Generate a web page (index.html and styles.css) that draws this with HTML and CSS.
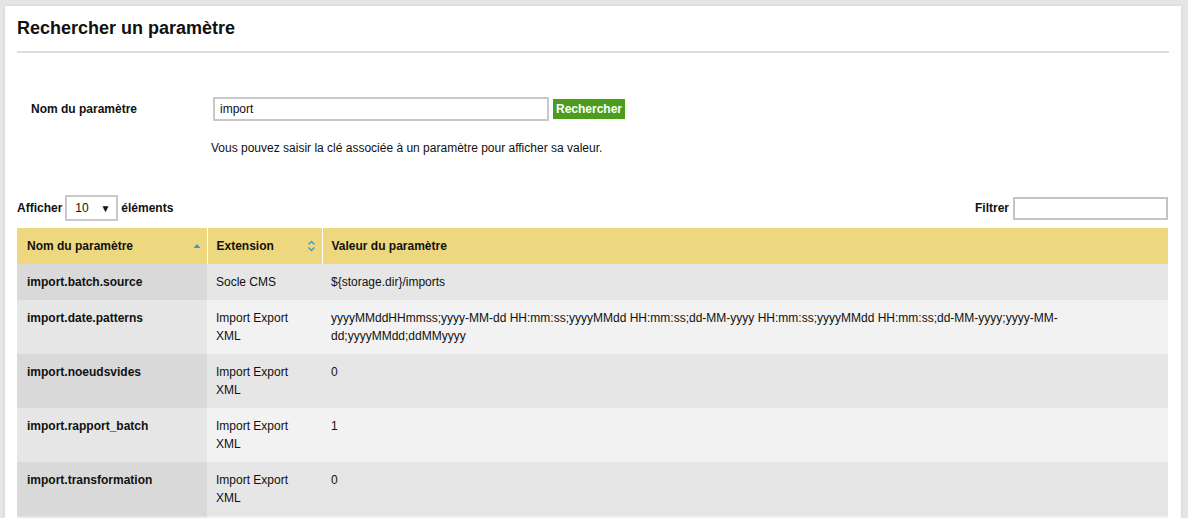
FILE: index.html
```html
<!DOCTYPE html>
<html lang="fr">
<head>
<meta charset="utf-8">
<title>Rechercher un paramètre</title>
<link rel="stylesheet" href="styles.css">
</head>
<body>
<div class="panel">
  <h1 class="title">Rechercher un paramètre</h1>
  <div class="search-form">
    <label class="form-label">Nom du paramètre</label>
    <div class="form-field">
      <div class="field-row">
        <input class="text-input" type="text" value="import">
        <button class="btn-search">Rechercher</button>
      </div>
      <p class="help">Vous pouvez saisir la clé associée à un paramètre pour afficher sa valeur.</p>
    </div>
  </div>
  <div class="table-tools">
    <div class="length">
      <span>Afficher</span>
      <span class="select"><span class="select-val">10</span><span class="select-arrow">&#9660;</span></span>
      <span>éléments</span>
    </div>
    <div class="filter">
      <span>Filtrer</span>
      <span class="filter-input"></span>
    </div>
  </div>
  <table class="data">
    <colgroup><col class="c1"><col class="c2"><col></colgroup>
    <thead>
      <tr>
        <th><div class="th-in"><span>Nom du paramètre</span>
          <svg class="sort" width="8" height="6" viewBox="0 0 8 6"><path d="M0.5 5 L4 1 L7.5 5 Z" fill="#3a9bd0"/></svg></div></th>
        <th><div class="th-in"><span>Extension</span>
          <svg class="sort" width="9" height="12" viewBox="0 0 9 12"><path d="M1.5 4.5 L4.5 1.5 L7.5 4.5 M1.5 7.5 L4.5 10.5 L7.5 7.5" fill="none" stroke="#3a9bd0" stroke-width="1.4"/></svg></div></th>
        <th><div class="th-in"><span>Valeur du paramètre</span></div></th>
      </tr>
    </thead>
    <tbody>
      <tr class="odd"><td>import.batch.source</td><td>Socle CMS</td><td>${storage.dir}/imports</td></tr>
      <tr class="even"><td>import.date.patterns</td><td>Import Export XML</td><td>yyyyMMddHHmmss;yyyy-MM-dd HH:mm:ss;yyyyMMdd HH:mm:ss;dd-MM-yyyy HH:mm:ss;yyyyMMdd HH:mm:ss;dd-MM-yyyy;yyyy-MM-dd;yyyyMMdd;ddMMyyyy</td></tr>
      <tr class="odd"><td>import.noeudsvides</td><td>Import Export XML</td><td>0</td></tr>
      <tr class="even"><td>import.rapport_batch</td><td>Import Export XML</td><td>1</td></tr>
      <tr class="odd"><td>import.transformation</td><td>Import Export XML</td><td>0</td></tr>
      <tr class="even spacer"><td></td><td></td><td></td></tr>
    </tbody>
  </table>
</div>
</body>
</html>
```
FILE: styles.css
```css
html, body {
  margin: 0;
  padding: 0;
}
body {
  background: #e6e6e6;
  font-family: "Liberation Sans", Arial, sans-serif;
  font-size: 12px;
  color: #111;
  padding: 6px 7px 0 5px;
  height: 518px;
  overflow: hidden;
  box-sizing: border-box;
}
.panel {
  background: #fff;
  width: 1176px;
  padding: 0 12px 20px 12px;
  box-sizing: border-box;
  box-shadow: 0 0 3px rgba(0,0,0,0.12);
}
.title {
  margin: 0;
  padding: 11px 0 12px 0;
  font-size: 18px;
  line-height: 22px;
  font-weight: bold;
  color: #111;
  border-bottom: 2px solid #dddddd;
}
.search-form {
  display: grid;
  grid-template-columns: 182px 1fr;
  margin-top: 44px;
  padding-left: 14px;
}
.form-label {
  font-weight: bold;
  line-height: 24px;
}
.field-row {
  display: flex;
  align-items: center;
  gap: 4px;
}
.text-input {
  width: 336px;
  height: 24px;
  box-sizing: border-box;
  border: 2px solid #c8c8c8;
  padding: 0 5px;
  font-family: "Liberation Sans", Arial, sans-serif;
  font-size: 12px;
  color: #111;
  outline: none;
  margin: 0;
}
.btn-search {
  height: 20px;
  width: 72px;
  background: #4a9e1b;
  color: #fff;
  border: 0;
  padding: 0;
  font-family: "Liberation Sans", Arial, sans-serif;
  font-size: 12px;
  font-weight: bold;
  margin: 0;
}
.help {
  margin: 20px 0 0 -2px;
  line-height: 14px;
}
.table-tools {
  display: flex;
  justify-content: space-between;
  align-items: center;
  margin-top: 40px;
  height: 26px;
}
.length, .filter {
  display: flex;
  align-items: center;
  font-weight: bold;
}
.select {
  display: flex;
  align-items: center;
  justify-content: space-between;
  width: 53px;
  height: 26px;
  box-sizing: border-box;
  border: 2px solid #c8c8c8;
  margin: 0 3px 0 3px;
  padding: 0 6px 0 8px;
  font-weight: normal;
}
.select-arrow {
  font-size: 10px;
  color: #111;
}
.filter-input {
  width: 155px;
  height: 23px;
  box-sizing: border-box;
  border: 2px solid #c4c4c4;
  margin-left: 4px;
  margin-right: 1px;
}
.data {
  width: 1151px;
  border-collapse: collapse;
  table-layout: fixed;
  margin-top: 7px;
}
.c1 { width: 190px; }
.c2 { width: 115px; }
.data th {
  background: #edd77f;
  text-align: left;
  font-weight: bold;
  height: 36px;
  padding: 0 0 0 10px;
  box-sizing: border-box;
}
.data th + th {
  border-left: 1px solid #fff;
  padding-left: 9px;
}
.th-in {
  display: flex;
  align-items: center;
  justify-content: space-between;
  padding-right: 6px;
}
.data td {
  padding: 9px 10px 9px 9px;
  line-height: 18px;
    vertical-align: top;
}
.data td:first-child {
  font-weight: bold;
  padding-left: 10px;
}
.data .spacer td {
  height: 20px;
}
.odd td { background: #e6e6e6; }
.odd td:first-child { background: #d9d9d9; }
.even td { background: #f2f2f2; }
.even td:first-child { background: #e6e6e6; }
.data td:nth-child(2) { padding-right: 30px; }
```
